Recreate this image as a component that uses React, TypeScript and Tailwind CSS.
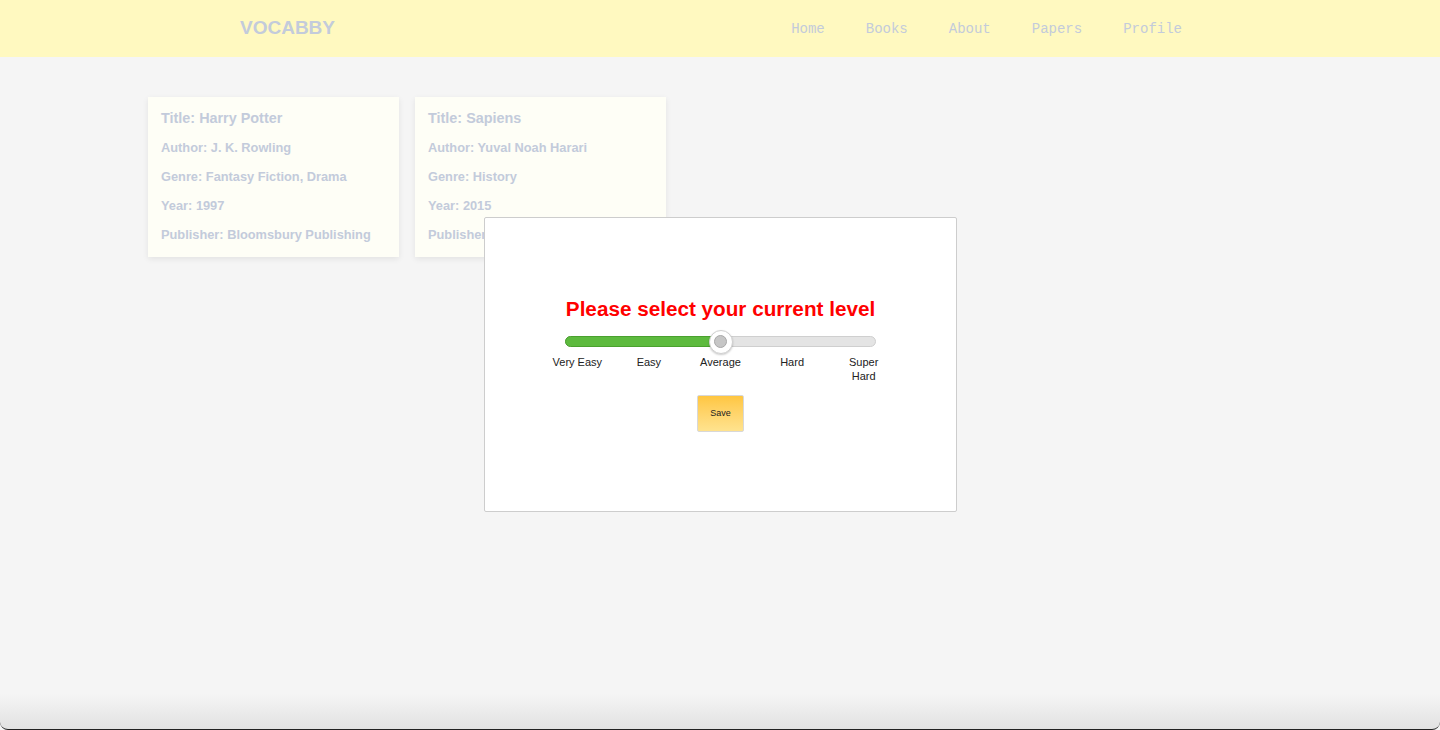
import React from 'react';

// --- DATA --- //

const navItems = ['Home', 'Books', 'About', 'Papers', 'Profile'];

const books = [
    { title: 'Harry Potter', author: 'J. K. Rowling', genre: 'Fantasy Fiction, Drama', year: '1997', publisher: 'Bloomsbury Publishing' },
    { title: 'Sapiens', author: 'Yuval Noah Harari', genre: 'History', year: '2015', publisher: 'Harper' },
];

const levels: React.ReactNode[] = ['Very Easy', 'Easy', 'Average', 'Hard', <>Super<br />Hard</>];

// --- SUB-COMPONENTS --- //

const Header: React.FC = () => (
    <header className="h-[57px] bg-[#fff9c0] flex items-center shrink-0">
        <div className="ml-[240px] text-[19px] font-bold text-[#c3cbdb] font-['Liberation_Sans',Arial,sans-serif]">VOCABBY</div>
        <nav className="ml-auto mr-[258px] pt-[2px] flex gap-[41px] font-['Liberation_Mono','Courier_New',monospace] text-[14px] text-[#c3cbdb]">
            {navItems.map((item) => (
                <a key={item} className="cursor-pointer">{item}</a>
            ))}
        </nav>
    </header>
);

const BookCard: React.FC<{ book: typeof books[number] }> = ({ book }) => (
    <div className="w-[251px] h-[160px] bg-[#fefef6] shadow-[0_2px_6px_rgba(0,0,0,0.08)] px-[13px] pt-[11px] text-[#c3cbdb] font-bold">
        <div className="text-[14.4px] leading-[20px] mb-[12px]">Title: {book.title}</div>
        <div className="flex flex-col gap-[14px] text-[12.8px] leading-[15px]">
            <div>Author: {book.author}</div>
            <div>Genre: {book.genre}</div>
            <div>Year: {book.year}</div>
            <div>Publisher: {book.publisher}</div>
        </div>
    </div>
);

const LevelSlider: React.FC<{ value: number }> = ({ value }) => {
    const pct = (value / (levels.length - 1)) * 100;
    return (
        <div className="w-[358px] flex flex-col items-center">
            <div className="relative w-[311px] h-[11px]">
                <div className="absolute inset-0 rounded-full bg-[#e4e4e4] border border-[#cfcfcf]" />
                <div className="absolute left-0 top-0 bottom-0 rounded-full bg-[#5dba3e] border border-[#4aa12e]" style={{ width: `${pct}%` }} />
                <div
                    className="absolute top-1/2 -translate-x-1/2 -translate-y-1/2 w-[24px] h-[24px] rounded-full bg-white border border-[#d0d0d0] shadow-[0_1px_2px_rgba(0,0,0,0.2)] flex items-center justify-center"
                    style={{ left: `${pct}%` }}
                >
                    <div className="w-[13px] h-[13px] rounded-full bg-[#c6c6c6] border border-[#a8a8a8]" />
                </div>
            </div>
            <div className="w-full grid grid-cols-5 mt-[8px] text-[11px] leading-[14px] text-[#222]">
                {levels.map((l, i) => (
                    <div key={i} className="text-center whitespace-nowrap">{l}</div>
                ))}
            </div>
        </div>
    );
};

// --- MAIN COMPONENT --- //

const App: React.FC = () => {
    return (
        <div className="h-[730px] bg-[#f5f5f5] flex flex-col overflow-hidden relative font-['Liberation_Sans',Arial,sans-serif]">
            <Header />
            <main className="flex-1 flex gap-[16px] pl-[148px] pt-[40px] items-start">
                {books.map((b) => (
                    <BookCard key={b.title} book={b} />
                ))}
            </main>
            <div className="h-[36px] shrink-0 bg-gradient-to-b from-[#f5f5f5] to-[#e2e2e2] border-b border-[#222] rounded-b-[8px]" />

            <div className="absolute left-[484px] top-[217px] w-[473px] h-[295px] bg-white border border-[#cdcdcd] rounded-[2px] flex flex-col items-center pt-[79px]">
                <h2 className="text-[20.7px] font-bold text-[#ff0000] leading-[24px]">Please select your current level</h2>
                <div className="mt-[15px]">
                    <LevelSlider value={2} />
                </div>
                <button className="mt-[12px] w-[47px] h-[37px] rounded-[2px] border border-[#d8d8d8] bg-gradient-to-b from-[#ffc63f] to-[#ffe38e] text-[9px] text-[#222]">
                    Save
                </button>
            </div>
        </div>
    );
};

export default App;
